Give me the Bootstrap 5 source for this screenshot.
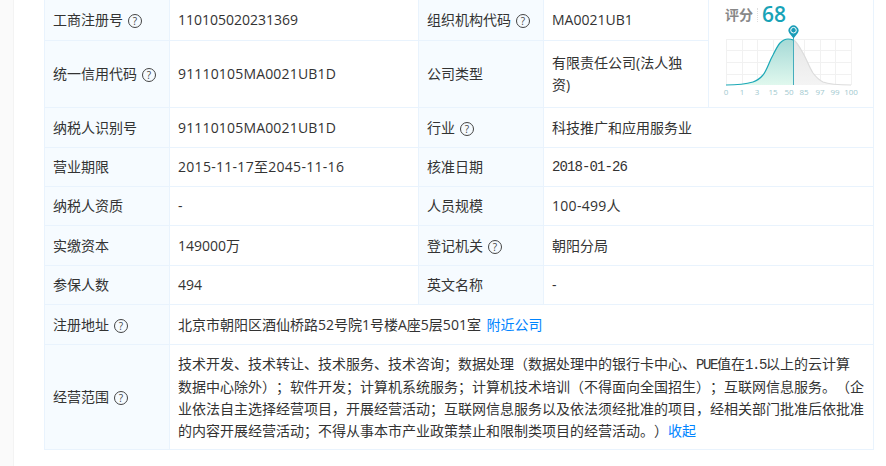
<!DOCTYPE html>
<html lang="zh">
<head>
<meta charset="utf-8">
<title>工商信息</title>
<link href="https://cdn.jsdelivr.net/npm/bootstrap@5.3.0/dist/css/bootstrap.min.css" rel="stylesheet">
<style>
html,body{height:100%;overflow:hidden;background:#fff;}
body{font-family:"Open Sans","Noto Sans CJK SC",sans-serif;font-size:14px;color:#333;text-spacing-trim:space-all;font-kerning:none;}
.side-strip{width:14px;background:#fafafa;border-right:1px solid #f3f3f3;flex:none;}
.main-pane{padding-left:30px;}
.info-tbl{--bs-table-border-color:#e9f3fd;--bs-table-bg:transparent;--bs-table-color:#333;width:829px;table-layout:fixed;margin:-1px 0 0 0;line-height:21.6px;}
.info-tbl>tbody>tr>td{padding:0 16px 0 8px;vertical-align:middle;}
.info-tbl>tbody>tr>td.lbl{background:#f6fbff;padding-right:0;white-space:nowrap;}
.rh-a{height:40px;}.rh-b{height:66px;}.rh-c{height:40px;}.rh-d{height:39px;}
.rh-e{height:105px;}
.info-tbl>tbody>tr>td.wide{padding-right:8px;}
.info-tbl>tbody>tr>td.score-cell{padding:0;vertical-align:top;}
.help-dot{display:inline-flex;width:14px;height:14px;border:1px solid #444;border-radius:50%;font-size:10px;line-height:1;color:#444;align-items:center;justify-content:center;margin-left:5px;vertical-align:0;}
.mono-date{font-family:"Liberation Mono","Noto Sans CJK SC",monospace;font-size:14px;letter-spacing:-.9px;}
.mono-bit{font-family:"Liberation Mono","Noto Sans CJK SC",monospace;font-size:14px;letter-spacing:-1.4px;}
.num-wide{letter-spacing:.17px;}
.num-wider{letter-spacing:.29px;}
.blue-lnk{color:#0084ff;text-decoration:none;}
.lnk-gap{margin-left:2px;}
.score-head{padding:5px 0 0 16px;height:24px;}
.score-lbl{font-size:14px;font-weight:700;color:#888;padding-right:4px;border-right:1px dotted #ddd;line-height:14px;}
.score-num{font-size:21px;line-height:21px;font-weight:600;color:#18a3b7;margin-left:4px;}
.score-svg{display:block;}
.tick-txt{font-family:"Open Sans",sans-serif;font-size:8px;fill:#9fc9cf;text-anchor:middle;}
</style>
</head>
<body class="d-flex">
<div class="side-strip"></div>
<div class="main-pane flex-grow-1">
<table class="table table-bordered info-tbl">
<colgroup><col style="width:125px"><col style="width:249px"><col style="width:125px"><col style="width:165px"><col style="width:165px"></colgroup>
<tbody>
<tr class="rh-a"><td class="lbl">工商注册号<span class="help-dot">?</span></td><td>110105020231369</td><td class="lbl">组织机构代码<span class="help-dot">?</span></td><td>MA0021UB1</td>
<td rowspan="2" class="score-cell">
<div class="score-head d-flex align-items-center"><span class="score-lbl">评分</span><span class="score-num">68</span></div>
<svg class="score-svg" width="165" height="83" viewBox="709 24 165 83" xmlns="http://www.w3.org/2000/svg">
<defs>
<linearGradient id="gL" x1="0" y1="0" x2="0" y2="1"><stop offset="0" stop-color="#a5d9d6"/><stop offset="1" stop-color="#e0f8ee"/></linearGradient>
<linearGradient id="gR" x1="0" y1="0" x2="0" y2="1"><stop offset="0" stop-color="#e6e6e6"/><stop offset="1" stop-color="#f4f4f4"/></linearGradient>
<clipPath id="cL"><rect x="726" y="30" width="67" height="56"/></clipPath>
<clipPath id="cR"><rect x="793" y="30" width="58" height="56"/></clipPath>
<path id="bell" d="M726 85 C740 85 748 83.5 753 82 C758 80.5 760 78.5 763 75 C767 70 769 62 773 55 C776 49 778 45 780 43 C783 40 785 39 788 39 C791 39 793 39.5 795 41 C798 44 800 48 803 53 C807 60 809 67 813 73 C816 77 819 80 823 82 C828 84 838 85 851 85"/>
</defs>
<g stroke="#f1f1f1" stroke-width="1" fill="none">
<path d="M726.5 39.5H851.5M726.5 50.5H851.5M726.5 62.5H851.5M726.5 74.5H851.5"/>
<path d="M726.5 39V85M742.5 39V85M757.5 39V85M773.5 39V85M788.5 39V85M804.5 39V85M820.5 39V85M835.5 39V85M851.5 39V85"/>
</g>
<g clip-path="url(#cL)">
<use href="#bell" fill="url(#gL)"/>
<use href="#bell" fill="none" stroke="#1ba8b6" stroke-width="1.2"/>
</g>
<g clip-path="url(#cR)">
<use href="#bell" fill="url(#gR)"/>
<use href="#bell" fill="none" stroke="#dcdcdc" stroke-width="1.2"/>
</g>
<path d="M793.5 36V85" stroke="#45adbd" stroke-width="1"/>
<path d="M793.5 38.5 L789.2 33 A5 5 0 1 1 797.8 33 Z" fill="#1a9db8"/>
<circle cx="793.5" cy="30.2" r="2.8" fill="none" stroke="#fff" stroke-width="1"/>
<circle cx="793.5" cy="30.2" r="1.1" fill="#1a9db8"/>
<g>
<text class="tick-txt" x="726" y="95">0</text><text class="tick-txt" x="742" y="95">1</text><text class="tick-txt" x="757" y="95">3</text><text class="tick-txt" x="773" y="95">15</text><text class="tick-txt" x="789" y="95">50</text><text class="tick-txt" x="804" y="95">85</text><text class="tick-txt" x="820" y="95">97</text><text class="tick-txt" x="835" y="95">99</text><text class="tick-txt" x="851" y="95">100</text>
</g>
</svg>
</td></tr>
<tr class="rh-b"><td class="lbl">统一信用代码<span class="help-dot">?</span></td><td><span class="num-wide">91110105MA0021UB1D</span></td><td class="lbl">公司类型</td><td>有限责任公司(法人独资)</td></tr>
<tr class="rh-c"><td class="lbl">纳税人识别号</td><td><span class="num-wide">91110105MA0021UB1D</span></td><td class="lbl">行业<span class="help-dot">?</span></td><td colspan="2">科技推广和应用服务业</td></tr>
<tr class="rh-d"><td class="lbl">营业期限</td><td><span class="num-wider">2015-11-17至2045-11-16</span></td><td class="lbl">核准日期</td><td colspan="2"><span class="mono-date">2018-01-26</span></td></tr>
<tr class="rh-d"><td class="lbl">纳税人资质</td><td>-</td><td class="lbl">人员规模</td><td colspan="2"><span class="num-wider">100-499人</span></td></tr>
<tr class="rh-c"><td class="lbl">实缴资本</td><td>149000万</td><td class="lbl">登记机关<span class="help-dot">?</span></td><td colspan="2">朝阳分局</td></tr>
<tr class="rh-d"><td class="lbl">参保人数</td><td>494</td><td class="lbl">英文名称</td><td colspan="2">-</td></tr>
<tr class="rh-c"><td class="lbl">注册地址<span class="help-dot">?</span></td><td colspan="4">北京市朝阳区酒仙桥路52号院1号楼A座5层501室 <a class="blue-lnk lnk-gap" href="#">附近公司</a></td></tr>
<tr class="rh-e"><td class="lbl">经营范围<span class="help-dot">?</span></td><td colspan="4" class="wide">技术开发、技术转让、技术服务、技术咨询；数据处理（数据处理中的银行卡中心、<span class="mono-bit">PUE</span>值在<span class="mono-bit">1.5</span>以上的云计算<br>数据中心除外）；软件开发；计算机系统服务；计算机技术培训（不得面向全国招生）；互联网信息服务。（企<br>业依法自主选择经营项目，开展经营活动；互联网信息服务以及依法须经批准的项目，经相关部门批准后依批准<br>的内容开展经营活动；不得从事本市产业政策禁止和限制类项目的经营活动。）<a class="blue-lnk" href="#">收起</a></td></tr>
</tbody>
</table>
</div>
<script src="https://cdn.jsdelivr.net/npm/bootstrap@5.3.0/dist/js/bootstrap.bundle.min.js"></script>
</body>
</html>
